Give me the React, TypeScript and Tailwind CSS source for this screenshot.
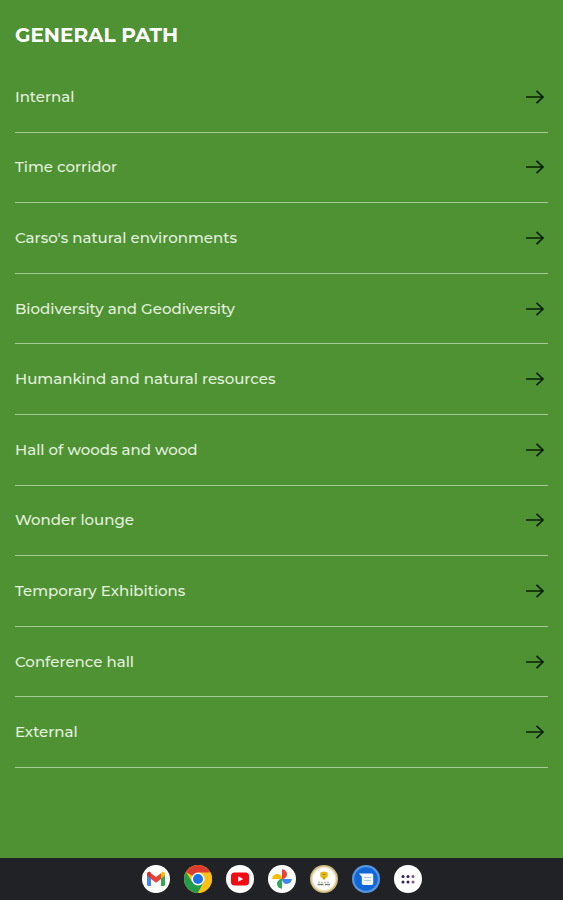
import type { ReactNode } from "react";

const stops = [
  "Internal",
  "Time corridor",
  "Carso's natural environments",
  "Biodiversity and Geodiversity",
  "Humankind and natural resources",
  "Hall of woods and wood",
  "Wonder lounge",
  "Temporary Exhibitions",
  "Conference hall",
  "External",
];

function Arrow() {
  return (
    <svg viewBox="0 0 20 16" className="h-4 w-5 shrink-0" fill="none" stroke="#0b1f06" strokeWidth="1.7" aria-hidden="true">
      <path d="M2 8H19M12.500 1.800 19 8l-6.500 6.200" />
    </svg>
  );
}

function GmailIcon() {
  return (
    <svg viewBox="0 0 28 28" className="size-7">
      <circle cx="14" cy="14" r="14" fill="#fff" />
      <path d="M5 9.500v10.300c0 .7.500 1.200 1.200 1.200H9v-8.500z" fill="#4285f4" />
      <path d="M23 9.500v10.300c0 .7-.5 1.200-1.200 1.200H19v-8.500z" fill="#34a853" />
      <path d="M19 9v4.500l4-3V9c0-2-2.100-2.800-3.500-1.700z" fill="#fbbc04" />
      <path d="M9 14V8.300l5 3.800 5-3.800V14l-5 3.800z" fill="#ea4335" />
      <path d="M5 9v1.500l4 3V8.300L8.500 7.300C7.100 6.200 5 7 5 9z" fill="#d93025" />
    </svg>
  );
}

function ChromeIcon() {
  return (
    <svg viewBox="0 0 28 28" className="size-7">
      <circle cx="14" cy="14" r="14" fill="#fbc116" />
      <path d="M14 14 1.880 7A14 14 0 0 1 26.120 7z" fill="#dd3b2e" />
      <path d="M8.370 17.250 1.880 7A14 14 0 0 0 14 28l5.630-10.750L14 14z" fill="#229b4b" />
      <path d="M14 7.500h12.400A14 14 0 0 1 14 28l5.630-10.750z" fill="#fbc116" />
      <circle cx="14" cy="14" r="6.500" fill="#fff" />
      <circle cx="14" cy="14" r="5" fill="#1a73e8" />
    </svg>
  );
}

function YouTubeIcon() {
  return (
    <svg viewBox="0 0 28 28" className="size-7">
      <circle cx="14" cy="14" r="14" fill="#fff" />
      <rect x="5" y="7.500" width="18" height="13" rx="3.500" fill="#f40b12" />
      <path d="m12.200 11.200 5 2.800-5 2.800z" fill="#fff" />
    </svg>
  );
}

function PhotosIcon() {
  return (
    <svg viewBox="0 0 28 28" className="size-7">
      <circle cx="14" cy="14" r="14" fill="#fff" />
      <path d="M14 14V4.200a5 5 0 0 1 5 5c0 2.700-2.300 4.800-5 4.800z" fill="#ea4335" />
      <path d="M14 14h9.800a5 5 0 0 1-5 5c-2.700 0-4.800-2.300-4.800-5z" fill="#4285f4" />
      <path d="M14 14v9.800a5 5 0 0 1-5-5c0-2.700 2.300-4.800 5-4.800z" fill="#34a853" />
      <path d="M14 14H4.200a5 5 0 0 1 5-5c2.700 0 4.800 2.300 4.800 5z" fill="#fbbc04" />
    </svg>
  );
}

function MuseumIcon() {
  return (
    <svg viewBox="0 0 28 28" className="size-7">
      <circle cx="14" cy="14" r="14" fill="#cbbb7b" />
      <circle cx="14" cy="14" r="12.500" fill="#ebe3bf" />
      <circle cx="14" cy="14" r="11" fill="#fff" />
      <path d="M10.300 7.500 14 6.500l3.700 1v4L14 14.800l-3.700-3.300z" fill="#e3b90f" />
      <path d="M12.500 9.500h3M14 12v2.500" stroke="#a5831c" />
      <path d="M8 17.200h12" stroke="#a9aaa0" strokeDasharray="2 1" />
      <path d="M7.500 19.500h6M15 19.500h5" stroke="#70827a" strokeWidth="1.300" />
    </svg>
  );
}

function MessagesIcon() {
  return (
    <svg viewBox="0 0 28 28" className="size-7">
      <circle cx="14" cy="14" r="14" fill="#5797df" />
      <circle cx="14" cy="14" r="11.800" fill="#1267d8" />
      <path d="M7 8.500h12.500c1 0 1.700.7 1.700 1.700v8c0 1-.7 1.700-1.700 1.700h-8c-1 0-1.700-.7-1.700-1.700v-6.500z" fill="#f5f9ff" />
      <path d="M12 12.500h7M12 15.500h7" stroke="#a9c9f2" />
    </svg>
  );
}

function AppsIcon() {
  return (
    <svg viewBox="0 0 28 28" className="size-7">
      <circle cx="14" cy="14" r="14" fill="#fff" />
      <g fill="#2b2359">
        <circle cx="9" cy="11.500" r="1.500" />
        <circle cx="14" cy="11.500" r="1.500" />
        <circle cx="9" cy="17" r="1.500" />
        <circle cx="14" cy="17" r="1.500" />
      </g>
      <g fill="#765985">
        <circle cx="19" cy="11.500" r="1.500" />
        <circle cx="19" cy="17" r="1.500" />
      </g>
    </svg>
  );
}

const apps: { label: string; icon: ReactNode }[] = [
  { label: "Gmail", icon: <GmailIcon /> },
  { label: "Chrome", icon: <ChromeIcon /> },
  { label: "YouTube", icon: <YouTubeIcon /> },
  { label: "Photos", icon: <PhotosIcon /> },
  { label: "Museum guide", icon: <MuseumIcon /> },
  { label: "Messages", icon: <MessagesIcon /> },
  { label: "All apps", icon: <AppsIcon /> },
];

export default function App() {
  return (
    <div className="flex min-h-screen flex-col bg-[#4f9234] font-[Montserrat,Inter,sans-serif] text-white">
      <main className="flex flex-1 flex-col px-[15px] pt-5 pb-[90px]">
        <h1 className="mb-3 text-xl leading-[30px] font-bold">GENERAL PATH</h1>
        <ul className="grid flex-1 auto-rows-fr">
          {stops.map((stop) => (
            <li key={stop} className="border-b border-[#a3cb92]">
              <a href="#" className="flex h-full items-center justify-between pr-1 text-[15px] leading-6 font-medium text-[#e3f1dd]">
                {stop}
                <Arrow />
              </a>
            </li>
          ))}
        </ul>
      </main>
      <nav aria-label="Taskbar" className="flex h-[42px] items-center justify-center gap-3.5 bg-[#212226]">
        {apps.map((app) => (
          <button key={app.label} type="button" aria-label={app.label} className="rounded-full">
            {app.icon}
          </button>
        ))}
      </nav>
    </div>
  );
}
